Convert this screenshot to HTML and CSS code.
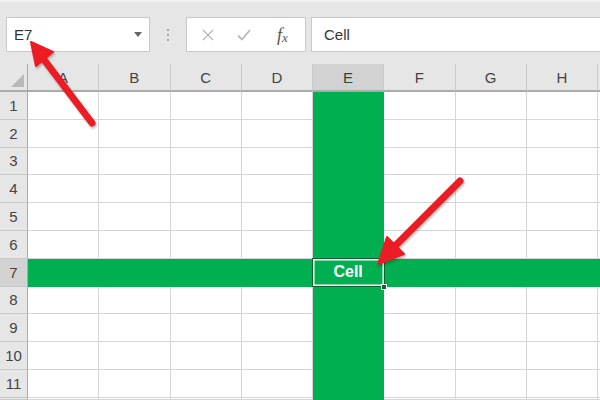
FILE: index.html
```html
<!DOCTYPE html>
<html>
<head>
<meta charset="utf-8">
<link rel="stylesheet" href="styles.css">
</head>
<body>
<div class="toolbar">
  <div class="namebox"><span class="nb-text">E7</span><span class="caret"></span></div>
  <div class="grip"><i></i><i></i><i></i></div>
  <div class="fnbox">
    <svg class="ic-x" width="12" height="12" viewBox="0 0 12 12"><path d="M1 1 L11 11 M11 1 L1 11" stroke="#b9b9b9" stroke-width="1.4" fill="none"/></svg>
    <svg class="ic-ok" width="14" height="12" viewBox="0 0 14 12"><path d="M1 6.5 L5 10.5 L13 1" stroke="#b9b9b9" stroke-width="1.8" fill="none"/></svg>
    <span class="fx">f<sub>x</sub></span>
  </div>
  <div class="formula">Cell</div>
</div>
<div class="sheet">
  <div class="h corner"><span class="tri"></span></div>
  <div class="h">A</div><div class="h">B</div><div class="h">C</div><div class="h">D</div><div class="h hs">E</div><div class="h">F</div><div class="h">G</div><div class="h">H</div><div class="h last"></div>

  <div class="r">1</div><div class="c"></div><div class="c"></div><div class="c"></div><div class="c"></div><div class="c g"></div><div class="c"></div><div class="c"></div><div class="c"></div><div class="c last"></div>
  <div class="r">2</div><div class="c"></div><div class="c"></div><div class="c"></div><div class="c"></div><div class="c g"></div><div class="c"></div><div class="c"></div><div class="c"></div><div class="c last"></div>
  <div class="r">3</div><div class="c"></div><div class="c"></div><div class="c"></div><div class="c"></div><div class="c g"></div><div class="c"></div><div class="c"></div><div class="c"></div><div class="c last"></div>
  <div class="r">4</div><div class="c"></div><div class="c"></div><div class="c"></div><div class="c"></div><div class="c g"></div><div class="c"></div><div class="c"></div><div class="c"></div><div class="c last"></div>
  <div class="r">5</div><div class="c"></div><div class="c"></div><div class="c"></div><div class="c"></div><div class="c g"></div><div class="c"></div><div class="c"></div><div class="c"></div><div class="c last"></div>
  <div class="r">6</div><div class="c"></div><div class="c"></div><div class="c"></div><div class="c"></div><div class="c g"></div><div class="c"></div><div class="c"></div><div class="c"></div><div class="c last"></div>
  <div class="r rs">7</div><div class="c g"></div><div class="c g"></div><div class="c g"></div><div class="c g"></div><div class="c g sel">Cell<span class="handle"></span></div><div class="c g"></div><div class="c g"></div><div class="c g"></div><div class="c g last"></div>
  <div class="r">8</div><div class="c"></div><div class="c"></div><div class="c"></div><div class="c"></div><div class="c g"></div><div class="c"></div><div class="c"></div><div class="c"></div><div class="c last"></div>
  <div class="r">9</div><div class="c"></div><div class="c"></div><div class="c"></div><div class="c"></div><div class="c g"></div><div class="c"></div><div class="c"></div><div class="c"></div><div class="c last"></div>
  <div class="r">10</div><div class="c"></div><div class="c"></div><div class="c"></div><div class="c"></div><div class="c g"></div><div class="c"></div><div class="c"></div><div class="c"></div><div class="c last"></div>
  <div class="r">11</div><div class="c"></div><div class="c"></div><div class="c"></div><div class="c"></div><div class="c g"></div><div class="c"></div><div class="c"></div><div class="c"></div><div class="c last"></div>
  <div class="r"></div><div class="c"></div><div class="c"></div><div class="c"></div><div class="c"></div><div class="c g"></div><div class="c"></div><div class="c"></div><div class="c"></div><div class="c last"></div>
</div>
<svg class="arrows" width="600" height="400" viewBox="0 0 600 400">
  <g fill="#ec1c24" stroke="#ec1c24" stroke-linecap="round" stroke-linejoin="round">
    <line x1="92" y1="123" x2="42" y2="57" stroke-width="7"/>
    <polygon points="31,42 53,52 36,66" stroke-width="2"/>
    <line x1="460" y1="181" x2="392" y2="249" stroke-width="7"/>
    <polygon points="378,264 387,237 404,254" stroke-width="2"/>
  </g>
</svg>
</body>
</html>
```
FILE: styles.css
```css
* { box-sizing: border-box; }
html, body { margin: 0; padding: 0; }
body {
  width: 600px;
  height: 400px;
  overflow: hidden;
  background: #e6e6e6;
  font-family: "Liberation Sans", Arial, sans-serif;
  position: relative;
}
.toolbar {
  height: 64px;
  display: flex;
  align-items: flex-start;
  padding: 15px 0 0 6px;
  border-top: 2px solid #f2f2f2;
}
.namebox {
  width: 144px;
  height: 35px;
  background: #fff;
  border: 1px solid #c9c9c9;
  display: flex;
  align-items: center;
  justify-content: space-between;
  padding: 0 7px 0 7px;
}
.nb-text { font-size: 15px; color: #333; }
.caret {
  width: 0; height: 0;
  border-left: 4px solid transparent;
  border-right: 4px solid transparent;
  border-top: 5px solid #666;
}
.grip {
  width: 36px;
  height: 35px;
  display: flex;
  flex-direction: column;
  align-items: center;
  justify-content: center;
  gap: 3px;
}
.grip i { display: block; width: 2px; height: 2px; background: #a8a8a8; }
.fnbox {
  width: 120px;
  height: 35px;
  background: #fff;
  border: 1px solid #c9c9c9;
  display: flex;
  align-items: center;
  padding-left: 15px;
}
.ic-x { margin-right: 23px; }
.ic-ok { margin-right: 26px; }
.fx {
  font-family: "Liberation Serif", serif;
  font-style: italic;
  font-size: 18px;
  color: #555;
  line-height: 1;
}
.fx sub { font-size: 13px; vertical-align: -1px; }
.formula {
  flex: 1;
  margin-left: 5px;
  height: 35px;
  background: #fff;
  border: 1px solid #c9c9c9;
  border-right: none;
  display: flex;
  align-items: center;
  padding-left: 12px;
  font-size: 15px;
  color: #333;
}
.sheet {
  display: grid;
  grid-template-columns: 28px repeat(8, 71.25px) 1fr;
  grid-template-rows: 28px repeat(11, 27.8px) 1fr;
  height: 336px;
  background: #fff;
}
.h {
  background: #e6e6e6;
  border-right: 1px solid #c9c9c9;
  border-bottom: 2px solid #ababab;
  display: flex;
  align-items: center;
  justify-content: center;
  font-size: 15px;
  color: #444;
}
.h.hs { background: #d2d2d2; color: #2b4a35; }
.h.last { border-right: none; }
.corner { position: relative; border-right: 1px solid #ababab; }
.tri {
  position: absolute;
  right: 3px;
  bottom: 3px;
  width: 13px;
  height: 13px;
  background: #b9b9b9;
  clip-path: polygon(100% 0, 100% 100%, 0 100%);
}
.r {
  background: #e6e6e6;
  border-right: 1px solid #ababab;
  border-bottom: 1px solid #c9c9c9;
  display: flex;
  align-items: center;
  justify-content: center;
  font-size: 15px;
  color: #444;
}
.r.rs { background: #d2d2d2; }
.c {
  border-right: 1px solid #d6d6d6;
  border-bottom: 1px solid #d6d6d6;
}
.c.last { border-right: none; }
.c.g { background: #00b050; border-color: #00b050; }
.sel {
  position: relative;
  display: flex;
  align-items: center;
  justify-content: center;
  color: #fff;
  font-weight: bold;
  font-size: 16px;
}
.sel::after {
  content: "";
  position: absolute;
  left: -1px; top: -1px; right: -2px; bottom: -1px;
  border: 1px solid #17602f;
  box-shadow: inset 0 0 0 1.5px #fff;
}
.handle {
  position: absolute;
  right: -4px;
  bottom: -4px;
  width: 6px;
  height: 6px;
  background: #17602f;
  border: 1px solid #fff;
  z-index: 2;
}
.arrows {
  position: absolute;
  left: 0;
  top: 0;
  pointer-events: none;
  z-index: 5;
  filter: drop-shadow(1px 2px 1px rgba(0,0,0,0.25));
}
```
